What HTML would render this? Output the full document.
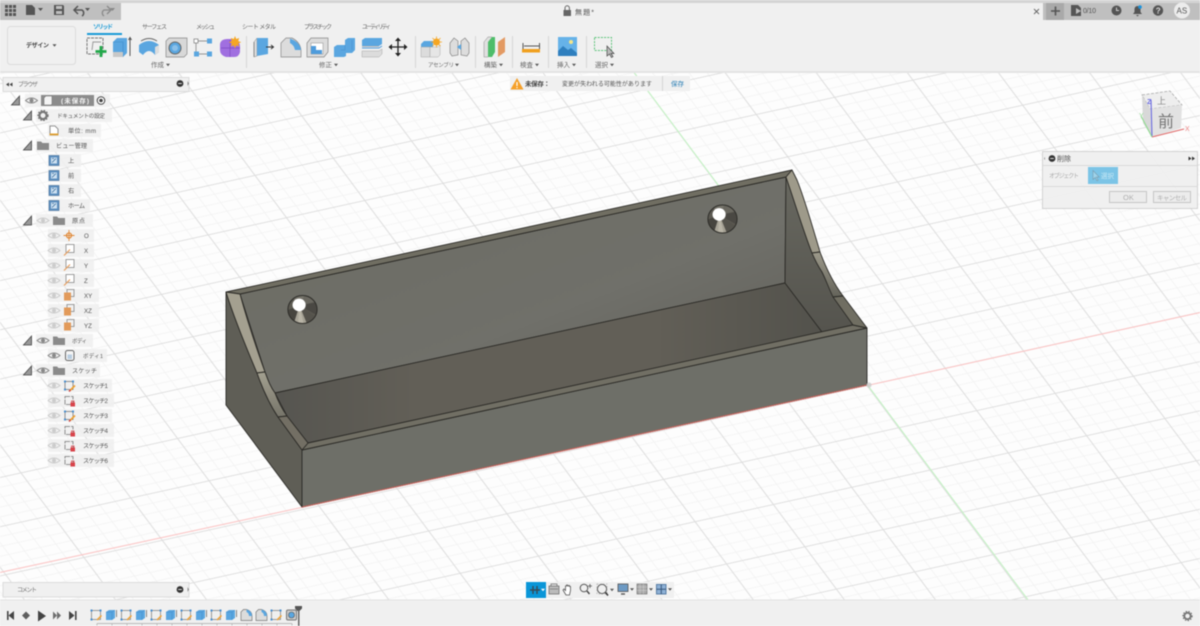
<!DOCTYPE html>
<html lang="ja"><head><meta charset="utf-8"><title>無題</title>
<style>
html,body{margin:0;padding:0;width:1200px;height:626px;overflow:hidden;background:#fdfdfd}
svg{display:block;filter:blur(.4px)}
text{font-family:"Liberation Sans","Noto Sans CJK JP",sans-serif;font-size:6.5px;fill:#555}
.b{font-weight:700}
.tab{font-size:6px;fill:#666}
.tl{font-size:6.5px;fill:#666}
.tr{font-size:6.2px;fill:#555}
</style></head><body>
<svg width="1200" height="626" viewBox="0 0 1200 626" xmlns="http://www.w3.org/2000/svg">
<defs>
<pattern id="grid" width="100" height="100" patternUnits="userSpaceOnUse" patternTransform="matrix(.783 -.172 .315 .423 867 385.5)">
<g fill="#f2f2f2">
<rect x="19.6" width="1.1" height="100"/><rect x="39.6" width="1.1" height="100"/><rect x="59.6" width="1.1" height="100"/><rect x="79.6" width="1.1" height="100"/>
<rect y="19.3" width="100" height="1.5"/><rect y="39.3" width="100" height="1.5"/><rect y="59.3" width="100" height="1.5"/><rect y="79.3" width="100" height="1.5"/>
</g>
<g fill="#dedede"><rect x="-.7" width="1.4" height="100"/><rect x="99.3" width="1.4" height="100"/><rect y="-1" width="100" height="2"/><rect y="99" width="100" height="2"/></g>
</pattern>
<linearGradient id="gBack" x1="0" y1="0" x2="1" y2="1"><stop offset="0" stop-color="#6c6c63"/><stop offset=".6" stop-color="#70706a"/><stop offset="1" stop-color="#5f5e58"/></linearGradient>
<linearGradient id="gFloor" x1="0" y1="0" x2="1" y2="0"><stop offset="0" stop-color="#565550"/><stop offset=".25" stop-color="#625f57"/><stop offset=".7" stop-color="#625f57"/><stop offset="1" stop-color="#53524c"/></linearGradient>
<linearGradient id="gRight" x1="0" y1="0" x2="0" y2="1"><stop offset="0" stop-color="#686860"/><stop offset="1" stop-color="#55544e"/></linearGradient>
<linearGradient id="gCurveL" x1="0" y1="0" x2="0" y2="1"><stop offset="0" stop-color="#a3a090"/><stop offset="1" stop-color="#77756a"/></linearGradient>
<linearGradient id="gCurveR" x1="0" y1="0" x2="0" y2="1"><stop offset="0" stop-color="#9c998a"/><stop offset="1" stop-color="#64635a"/></linearGradient>
<clipPath id="hc"><ellipse rx="14.6" ry="14"/></clipPath>
<g id="hole">
<ellipse rx="14.6" ry="14" fill="#5c5a52"/>
<g clip-path="url(#hc)">
<path d="M-3,-4L-18,2L-16,18L-8,18Z" fill="#47453f"/>
<path d="M-3,-4L-10,18L-2,20L2,18Z" fill="#a8a497"/>
<path d="M-3,-4L-5,20L8,18Z" fill="#bdb9ab" opacity=".75"/>
<path d="M-3,-4L6,18L18,10Z" fill="#55534c"/>
<path d="M-3,-4L18,8L18,-8Z" fill="#4a4843"/>
<path d="M-3,-4L18,-9L2,-18Z" fill="#6a6860"/>
<path d="M-3,-4L4,-18L-14,-16Z" fill="#76746b"/>
</g>
<ellipse rx="14.6" ry="14" fill="none" stroke="#2e2d29" stroke-width="1"/>
<ellipse cx="-3.4" cy="-4.6" rx="6.6" ry="6.3" fill="#fff"/>
</g>
<g id="eye"><path d="M-6,0Q0,-5 6,0Q0,5 -6,0Z" fill="none" stroke="#888" stroke-width="1"/><circle r="2" fill="#888"/></g>
<g id="eyef" opacity=".35"><path d="M-6,0Q0,-5 6,0Q0,5 -6,0Z" fill="none" stroke="#888" stroke-width="1"/><circle r="2" fill="#888"/></g>
<g id="tri"><path d="M-5,4L3,4L3,-5Z" fill="#999" stroke="#444" stroke-width=".8"/></g>
<path id="folder" d="M-6,-4h4l1.5,1.5h6.5v7h-12z" fill="#8a8a8a"/>
<g id="view"><rect x="-5" y="-5" width="10" height="10" fill="#5d8fbf" stroke="#446f99" stroke-width=".6"/><rect x="-3" y="-3" width="6" height="6" fill="#cfe2f2"/><path d="M-2,2L2,-2M-2,-2h2" stroke="#3c6e9c" stroke-width=".8" fill="none"/></g>
<g id="axis"><rect x="-3" y="-6" width="8" height="8" fill="#fff" stroke="#888" stroke-width=".8"/><path d="M-5,5L1,-1" stroke="#e8a060" stroke-width="1.2"/></g>
<g id="plane"><rect x="-2" y="-6" width="7" height="7" fill="none" stroke="#888" stroke-width=".8"/><rect x="-5" y="-3" width="7" height="8" fill="#e29a5a"/></g>
<g id="sk1"><rect x="-4" y="-4" width="8" height="8" fill="none" stroke="#777" stroke-width=".8"/><g fill="#4a90d0"><rect x="-5" y="-5" width="2" height="2"/><rect x="3" y="-5" width="2" height="2"/><rect x="-5" y="3" width="2" height="2"/></g><path d="M1,5L6,0" stroke="#f0a030" stroke-width="1.6"/><path d="M0,6L1.5,4.5" stroke="#d04040" stroke-width="1.4"/></g>
<g id="sk2"><rect x="-4" y="-4" width="8" height="8" fill="none" stroke="#777" stroke-width=".8" stroke-dasharray="5 1"/><rect x="1.5" y="2" width="4.5" height="4" fill="#d9434a"/><path d="M2.5,2v-1.5h2.5v1.500" fill="none" stroke="#d9434a" stroke-width=".8"/></g>
<g id="tlsk"><rect x="-4.5" y="-4.5" width="9" height="9" fill="none" stroke="#777" stroke-width=".7"/><g fill="#4a90d0"><rect x="-5.5" y="-5.5" width="2" height="2"/><rect x="3.5" y="-5.5" width="2" height="2"/><rect x="-5.5" y="3.5" width="2" height="2"/></g><path d="M1,5L5.5,.5" stroke="#f0a030" stroke-width="1.4"/></g>
<g id="tlex"><path d="M-5,-3L-2,-5H4V3L1,5H-5Z" fill="#5aa6e0"/><path d="M1,5V-3H-5M1,-3L4,-5" fill="none" stroke="#3c86c4" stroke-width=".4"/><path d="M5.500,-5V2" stroke="#555" stroke-width=".7"/></g>
<g id="tlfi"><path d="M-5.500,5.500V-3L-3,-5.500H0Q5.500,-4 5.500,1V5.500Z" fill="#dcdcdc" stroke="#777" stroke-width=".7"/><path d="M0,-5.500Q5.500,-4 5.500,1L2.500,1Q2.500,-2 0,-3Z" fill="#5aa6e0"/></g>
<path id="caret" d="M-2,-1.200h4l-2,2.400z" fill="#555"/>
<path id="caretw" d="M-2,-1.200h4l-2,2.400z" fill="#fff"/>
<g id="smallcirc"><circle r="3.400" fill="#333"/><path d="M-1.800,0h3.600" stroke="#f0f0f0" stroke-width=".9"/></g>
</defs>

<rect width="1200" height="626" fill="#fdfdfd"/>
<rect width="1200" height="626" fill="url(#grid)"/>
<path d="M0,572.500L867,385.500L1200,312.500" stroke="#fbc6c6" stroke-width="1.100" fill="none"/>
<path d="M633,71L1058,640" stroke="#c5f3c5" stroke-width="1.100" fill="none"/>

<!-- model -->
<path d="M226,292L792,170L820,252L867,328V385L302,507L226,405Z" fill="#5f5e56" stroke="none" opacity="0"/>
<g stroke="#2c2b27" stroke-width=".9" stroke-linejoin="round">
<path d="M226,292C234,318 246,347 257,373C263,390 270,405 278,417L302,450V507L226,405Z" fill="#5f5e56"/>
<path d="M302,450L867,328V385L302,507Z" fill="#6e6f68"/>
<path d="M240,294L786,177L785,283L275,393C270,386 268,380 265,372Z" fill="url(#gBack)"/>
<path d="M275,393L785,283L822,332L308,443L287,416Z" fill="url(#gFloor)"/>
<path d="M786,177C795,203 803,230 812,253C815,260 818,266 822,272C832,292 842,308 853,325L822,332L785,283Z" fill="url(#gRight)"/>
<path d="M226,292L792,170L786,177L240,294Z" fill="#706e62"/>
<path d="M302,450L867,328L853,325L308,443Z" fill="#716f64"/>
<path d="M226,292L240,294C247,320 256,347 265,372L257,373C246,347 234,318 226,292Z" fill="#a4a090"/>
<path d="M257,373L265,372C268,380 270,386 275,393C278,401 282,409 287,416L278,417C270,405 263,390 257,373Z" fill="url(#gCurveL)"/>
<path d="M278,417L287,416L308,443L302,450Z" fill="#736f64"/>
<path d="M792,170L786,177C795,203 803,230 812,253L820,252C812,225 805,200 797,180Z" fill="#9e9a8a"/>
<path d="M812,253L820,252C826,268 834,284 843,296L833,297C829,289 826,280 822,272C818,266 815,260 812,253Z" fill="url(#gCurveR)"/>
<path d="M833,297L843,296L867,328L853,325Z" fill="#706e62"/>
</g>
<path d="M302,507L867,385" stroke="#c96a62" stroke-width="1"/>
<circle cx="869" cy="385" r="2.600" fill="#ccc" opacity=".8"/>
<use href="#hole" x="302.500" y="309.500"/>
<use href="#hole" x="722.500" y="219"/>

<!-- top chrome -->
<rect width="1200" height="3" fill="#d4d4d4"/>
<rect y="3" width="1200" height="17" fill="#bfbfbf"/>
<rect x="121" y="3" width="922" height="18" fill="#f0f0f0"/>
<rect y="20" width="1200" height="51" fill="#f0f0f0"/>
<rect y="71" width="1200" height="2" fill="#e4e4e4"/>
<rect x="1046" y="3" width="18" height="17" fill="#a9a9a9"/>
<!-- top-left icons -->
<g fill="#555">
<rect x="5" y="5" width="3" height="3"/><rect x="9" y="5" width="3" height="3"/><rect x="13" y="5" width="3" height="3"/>
<rect x="5" y="9" width="3" height="3"/><rect x="9" y="9" width="3" height="3"/><rect x="13" y="9" width="3" height="3"/>
<rect x="5" y="13" width="3" height="3"/><rect x="9" y="13" width="3" height="3"/><rect x="13" y="13" width="3" height="3"/>
<path d="M26,5h6l3,3v7h-9z"/><path d="M38,8h5l-2.500,3z"/>
<path d="M54,5h9l1,1v9h-10zM56,6v3h6v-3zM56,11v3h6v-3z" fill-rule="evenodd"/>
<path d="M85,8h5l-2.500,3z"/><path d="M110,8h5l-2.500,3z" fill="#888"/>
</g>
<path d="M75,10h7a3.500,3.500 0 0 1 0,6M78,6l-4,4l4,4" fill="none" stroke="#555" stroke-width="1.500"/>
<path d="M111,10h-7a3.500,3.500 0 0 0 0,6M107,6l4,4l-4,4" fill="none" stroke="#8a8a8a" stroke-width="1.300"/>
<!-- title -->
<rect x="563.500" y="10" width="7.500" height="6" fill="#666"/><path d="M565,10V8a2.200,2.200 0 0 1 4.400,0v2" fill="none" stroke="#666" stroke-width="1"/>
<text x="575" y="14.500" textLength="19" style="font-size:7px">無題*</text>
<path d="M1034,9l5,5M1039,9l-5,5" stroke="#666" stroke-width=".9"/>
<path d="M1051,11h9M1055.500,6.500v9" stroke="#555" stroke-width="1.600"/>
<path d="M1071,5h7l3,3v8h-10z" fill="#555"/><path d="M1076,8l5,3l-5,3z" fill="#bfbfbf"/>
<text x="1083" y="13" textLength="13" style="font-size:7px">0/10</text>
<circle cx="1116.500" cy="10.500" r="5" fill="#555"/><path d="M1116.500,7.500v3h2.500" stroke="#ccc" fill="none"/>
<path d="M1133,14h9l-1.500,-2v-3a3,3 0 0 0 -6,0v3zM1136,15h3l-1.500,1.500z" fill="#555"/><circle cx="1140" cy="7" r="1.800" fill="#1b93dd"/>
<circle cx="1158" cy="10.500" r="5.200" fill="#555"/><text x="1155.800" y="13.500" style="font-size:8px;fill:#ddd" class="b">?</text>
<circle cx="1182" cy="10.500" r="8" fill="#ececec"/><text x="1176.500" y="13.500" style="font-size:8px;fill:#555">AS</text>

<!-- tabs -->
<text x="93" y="29" textLength="20" class="b" style="fill:#1a9ad6;font-size:6px">ソリッド</text>
<rect x="87" y="33" width="35" height="2" fill="#1a9ad6"/>
<text x="142" y="29" textLength="25" class="tab">サーフェス</text>
<text x="196" y="29" textLength="19" class="tab">メッシュ</text>
<text x="242" y="29" textLength="34" class="tab">シート メタル</text>
<text x="304" y="29" textLength="28" class="tab">プラスチック</text>
<text x="362" y="29" textLength="29" class="tab">ユーティリティ</text>
<rect x="7.500" y="26.500" width="68" height="38" rx="3" fill="#f0f0f0" stroke="#dcdcdc"/>
<text x="26" y="47.500" textLength="23" class="b" style="font-size:6px;fill:#444">デザイン</text><use href="#caret" x="54.500" y="45.500"/>

<!-- toolbar icons -->
<g>
<rect x="87" y="38" width="16" height="16" fill="none" stroke="#777" stroke-dasharray="3 1"/><path d="M92,50L93,42H101" fill="none" stroke="#999"/><path d="M101,46v11M95.500,51.500h11" stroke="#22a84a" stroke-width="2.800"/>
<path d="M113,42l4,-4h10v15l-4,4h-10z" fill="#5aa6e0"/><path d="M113,42h10v15" fill="none" stroke="#3f89c8" stroke-width=".6"/><path d="M113,52h10v5h-10z" fill="#c8c8c8"/><path d="M130,38v18M128.500,40l1.500,-2.500l1.500,2.500" stroke="#555" fill="none"/>
<path d="M139,45Q149,37 159,45l0,7l-4,3Q149,47 143,55l-4,-3z" fill="#5aa6e0"/><path d="M141,41Q149,36 157,41" fill="none" stroke="#666"/><path d="M155,47l4,-2v7l-4,3z" fill="#ddd"/>
<path d="M166,41l3,-3h18v16l-3,3h-18z" fill="#d8d8d8" stroke="#888" stroke-width=".7"/><circle cx="175" cy="48" r="6" fill="#5aa6e0" stroke="#666"/><circle cx="175" cy="48" r="3" fill="#8cc0e8"/>
<rect x="194" y="39" width="4" height="4" fill="#fff" stroke="#777" stroke-width=".7"/><rect x="207" y="38.500" width="5" height="5" fill="#5aa6e0"/><rect x="194" y="51.500" width="5" height="5" fill="#5aa6e0"/><rect x="207" y="51.500" width="5" height="5" fill="#5aa6e0"/><path d="M198,41h9M196,43v8.500M199,54h8" stroke="#777" stroke-width=".7"/>
<path d="M220,44q1,-5 7,-5h8q5,2 5,8v5q-1,5 -6,5h-8q-6,-2 -6,-7z" fill="#a06fe0"/><path d="M221,48h19M230,40v17" stroke="#7e4cc2" stroke-width=".7"/><path d="M235,36l1.200,3l3,-1l-1,3l3,1.200l-3,1.200l1,3l-3,-1l-1.200,3l-1.200,-3l-3,1l1,-3l-3,-1.200l3,-1.200l-1,-3l3,1z" fill="#f5a623"/>
<path d="M254,42l3,-4v18l-3,1z" fill="#ddd" stroke="#888" stroke-width=".5"/><path d="M257,38h11v16l-11,2z" fill="#5aa6e0"/><path d="M266,47h7M271,45l2.500,2l-2.500,2" stroke="#333" fill="none"/><path d="M254,42v15" stroke="#888"/>
<path d="M281,43L286,38H292Q300,42 301,50V57H281Z" fill="#dcdcdc" stroke="#888" stroke-width=".7"/><path d="M290,38.500Q300,42 301,50H295Q294,45 290,43Z" fill="#5aa6e0"/>
<path d="M307,43l4,-5h17v14l-4,5h-17z" fill="#dcdcdc" stroke="#888" stroke-width=".7"/><rect x="311" y="43" width="12" height="11" fill="#fff" stroke="#888" stroke-width=".5"/><path d="M311,46l5,0v4h6v4h-11z" fill="#4f9cdc"/>
<path d="M334,47l3,-2h8v-5l3,-2h7v12l-3,3h-6v3l-2,1h-10z" fill="#5aa6e0"/><path d="M345,45v5h-4M352,40v10" stroke="#3f89c8" stroke-width=".4" fill="none"/>
<path d="M362,40l3,-2h17v6l-3,2h-17z" fill="#5aa6e0"/><path d="M362,51h17l3,-2v5l-3,3h-17z" fill="#dcdcdc" stroke="#999" stroke-width=".4"/><path d="M362,48h17l3,-2" stroke="#4f9cdc" fill="none"/><path d="M362,46.500h17" stroke="#bbb"/>
<path d="M398,40v14M391,47h14" stroke="#222" stroke-width="1.300"/><path d="M398,37.500l3,3.500h-6zM398,56.500l3,-3.500h-6zM388.500,47l3.500,-3v6zM407.500,47l-3.500,-3v6z" fill="#222"/>
<path d="M421,44l3,-3h9v6h-12z" fill="#5aa6e0"/><path d="M421,47h9v10h-9z" fill="#dcdcdc" stroke="#999" stroke-width=".4"/><path d="M430,47h8l2,-2v10l-2,2h-8z" fill="#e6e6e6" stroke="#999" stroke-width=".4"/><circle cx="436.500" cy="42" r="3.500" fill="#f5a623"/><path d="M436.500,36.500v11M431,42h11M432.500,38l8,8M440.500,38l-8,8" stroke="#f5a623" stroke-width=".8"/>
<path d="M450,43l4,-5l4,3v14l-6,1l-2,-3zM469,43l-4,-5l-4,3v14l6,1l2,-3z" fill="#ddd" stroke="#888" stroke-width=".7"/><path d="M457,47l4,-3v6z" fill="#5aa6e0"/>
<path d="M484,42l4,-5h4v15l-4,5h-4z" fill="#e0e0e0" stroke="#888" stroke-width=".5"/><path d="M488,42l4,-5h3v15l-3,5h-4z" fill="#4fbd6a"/><path d="M498,42l7,-5v15l-7,5z" fill="#e39a63"/>
<path d="M523,43v6M539.500,43v6M524,46h15" stroke="#555" fill="none"/><rect x="522" y="49" width="18" height="3.500" fill="#f0a020"/>
<rect x="558" y="37" width="19" height="19" fill="#66b2e8"/><circle cx="571" cy="42" r="2" fill="#f4e58a"/><path d="M558,56v-5l5,-5l5,4l3,-2l6,5v3z" fill="#2f7fbe"/>
<rect x="594.500" y="37.500" width="17" height="13" fill="none" stroke="#5cc47a" stroke-dasharray="2 1.200"/><path d="M607,46v10l2.500,-2l2,3.500l1.500,-1l-2,-3h3z" fill="#bbb" stroke="#444" stroke-width=".7"/>
</g>
<g stroke="#d6d6d6"><path d="M246.500,36v32M415.500,36v32M475.500,36v32M512.500,36v32M548.500,36v32M586.500,36v32"/></g>
<g>
<text x="151" y="67" textLength="13" class="tl">作成</text><use href="#caret" x="168" y="65"/>
<text x="319" y="67" textLength="13" class="tl">修正</text><use href="#caret" x="336" y="65"/>
<text x="428" y="67" textLength="26" class="tl" style="font-size:5.500px">アセンブリ</text><use href="#caret" x="457" y="65"/>
<text x="484" y="67" textLength="13" class="tl">構築</text><use href="#caret" x="501" y="65"/>
<text x="520" y="67" textLength="13" class="tl">検査</text><use href="#caret" x="537" y="65"/>
<text x="557" y="67" textLength="13" class="tl">挿入</text><use href="#caret" x="574" y="65"/>
<text x="595" y="67" textLength="13" class="tl">選択</text><use href="#caret" x="612" y="65"/>
</g>

<!-- unsaved bar -->
<rect x="510" y="76" width="180" height="15" fill="#f0f0f0"/>
<path d="M517,78l6.500,11.500h-13z" fill="#f5a02a"/><rect x="516.400" y="82" width="1.200" height="4" fill="#fff"/><rect x="516.400" y="87" width="1.200" height="1.200" fill="#fff"/>
<text x="525" y="86" textLength="25" class="b" style="font-size:6.500px;fill:#444">未保存：</text>
<text x="562" y="86" textLength="90" style="font-size:6px">変更が失われる可能性があります</text>
<rect x="662" y="76" width="1" height="15" fill="#d4d4d4"/>
<text x="671" y="86" textLength="13" style="font-size:6.500px;fill:#2b7fb5">保存</text>

<!-- browser panel -->
<rect x="3" y="77.500" width="186" height="14" fill="#f0f0f0" stroke="#dcdcdc"/>
<path d="M6,84.500l3,-2v4zM9.500,84.500l3,-2v4z" fill="#444"/>
<text x="18" y="86.500" textLength="20" style="font-size:6px;fill:#777">ブラウザ</text>
<use href="#smallcirc" x="180" y="83.500"/>
<path d="M187.500,81l1.500,2.500l-1.500,2.500z" fill="#888"/>

<!-- tree backgrounds -->
<g fill="#f0f0f0" opacity=".92">
<rect x="25" y="94" width="85" height="13"/><rect x="36" y="109" width="76" height="13"/><rect x="48" y="124" width="53" height="13"/><rect x="36" y="139" width="57" height="13"/>
<rect x="48" y="154" width="33" height="13"/><rect x="48" y="169" width="33" height="13"/><rect x="48" y="184" width="33" height="13"/><rect x="48" y="199" width="42" height="13"/>
<rect x="36" y="214" width="57" height="13"/>
<rect x="48" y="229" width="46" height="13"/><rect x="48" y="244" width="46" height="13"/><rect x="48" y="259" width="46" height="13"/><rect x="48" y="274" width="46" height="13"/><rect x="48" y="289" width="51" height="13"/><rect x="48" y="304" width="51" height="13"/><rect x="48" y="319" width="51" height="13"/>
<rect x="36" y="334" width="57" height="13"/><rect x="48" y="349" width="59" height="13"/><rect x="36" y="364" width="64" height="13"/>
<rect x="48" y="379" width="64" height="13"/><rect x="48" y="394" width="66" height="13"/><rect x="48" y="409" width="64" height="13"/><rect x="48" y="424" width="66" height="13"/><rect x="48" y="439" width="66" height="13"/><rect x="48" y="454" width="66" height="13"/>
</g>
<!-- tree content -->
<use href="#tri" x="16.500" y="101"/><use href="#eye" x="31.500" y="100.500"/>
<rect x="41" y="95" width="53" height="11" fill="#8c8c8c"/><path d="M44,98l2,-2h6v8l-1,1h-7z" fill="#f4f4f4" stroke="#666" stroke-width=".5"/>
<text x="61" y="103" textLength="28" class="b" style="font-size:6.500px;fill:#f4f4f4">(未保存)</text>
<circle cx="101" cy="100.500" r="3.800" fill="#fff" stroke="#444"/><circle cx="101" cy="100.500" r="1.800" fill="#444"/>

<use href="#tri" x="28.500" y="116"/>
<circle cx="43" cy="115.500" r="3.600" fill="none" stroke="#777" stroke-width="2.200"/><circle cx="43" cy="115.500" r="5" fill="none" stroke="#777" stroke-width="1.300" stroke-dasharray="1.600 1.400"/>
<text x="57" y="118" textLength="48" class="tr" style="font-size:5.600px">ドキュメントの設定</text>

<path d="M50,126h5l3,3v6h-8z" fill="#fff" stroke="#777" stroke-width=".8"/><rect x="49.500" y="133.500" width="9" height="1.800" fill="#e0a030"/>
<text x="68" y="133" textLength="28" class="tr">単位: mm</text>

<use href="#tri" x="28.500" y="146"/><use href="#folder" x="43" y="145.500"/>
<text x="56" y="148" textLength="31" class="tr">ビュー管理</text>
<use href="#view" x="54" y="160.500"/><text x="68" y="163" class="tr">上</text>
<use href="#view" x="54" y="175.500"/><text x="68" y="178" class="tr">前</text>
<use href="#view" x="54" y="190.500"/><text x="68" y="193" class="tr">右</text>
<use href="#view" x="54" y="205.500"/><text x="68" y="208" textLength="17" class="tr">ホーム</text>

<use href="#tri" x="28.500" y="221"/><use href="#eyef" x="43" y="220.500"/><use href="#folder" x="59" y="220.500"/>
<text x="72" y="223" textLength="13" class="tr">原点</text>
<use href="#eyef" x="54" y="235.500"/><circle cx="69" cy="235.500" r="2.500" fill="none" stroke="#e08a3a" stroke-width="1.300"/><path d="M63.500,235.500h11M69,230v11" stroke="#e08a3a" stroke-width=".9"/><text x="84" y="238" class="tr">O</text>
<use href="#eyef" x="54" y="250.500"/><use href="#axis" x="69" y="250.500"/><text x="84" y="253" class="tr">X</text>
<use href="#eyef" x="54" y="265.500"/><use href="#axis" x="69" y="265.500"/><text x="84" y="268" class="tr">Y</text>
<use href="#eyef" x="54" y="280.500"/><use href="#axis" x="69" y="280.500"/><text x="84" y="283" class="tr">Z</text>
<use href="#eyef" x="54" y="295.500"/><use href="#plane" x="69" y="295.500"/><text x="84" y="298" class="tr">XY</text>
<use href="#eyef" x="54" y="310.500"/><use href="#plane" x="69" y="310.500"/><text x="84" y="313" class="tr">XZ</text>
<use href="#eyef" x="54" y="325.500"/><use href="#plane" x="69" y="325.500"/><text x="84" y="328" class="tr">YZ</text>

<use href="#tri" x="28.500" y="341"/><use href="#eye" x="43" y="340.500"/><use href="#folder" x="59" y="340.500"/>
<text x="72" y="343" textLength="15" class="tr" style="font-size:5.500px">ボディ</text>
<use href="#eye" x="54" y="355.500"/><rect x="65.500" y="350.500" width="8.500" height="10" rx="2" fill="#f4f4f4" stroke="#666"/><rect x="67.500" y="354.500" width="4.500" height="4.500" fill="#b8cde0"/>
<text x="83" y="358" textLength="20" class="tr" style="font-size:5.500px">ボディ1</text>

<use href="#tri" x="28.500" y="371"/><use href="#eye" x="43" y="370.500"/><use href="#folder" x="59" y="370.500"/>
<text x="72" y="373" textLength="25" class="tr">スケッチ</text>
<use href="#eyef" x="54" y="385.500"/><use href="#sk1" x="69" y="385.500"/><text x="83" y="388" textLength="25" class="tr">スケッチ1</text>
<use href="#eyef" x="54" y="400.500"/><use href="#sk2" x="69" y="400.500"/><text x="83" y="403" textLength="25" class="tr">スケッチ2</text>
<use href="#eyef" x="54" y="415.500"/><use href="#sk1" x="69" y="415.500"/><text x="83" y="418" textLength="25" class="tr">スケッチ3</text>
<use href="#eyef" x="54" y="430.500"/><use href="#sk2" x="69" y="430.500"/><text x="83" y="433" textLength="25" class="tr">スケッチ4</text>
<use href="#eyef" x="54" y="445.500"/><use href="#sk2" x="69" y="445.500"/><text x="83" y="448" textLength="25" class="tr">スケッチ5</text>
<use href="#eyef" x="54" y="460.500"/><use href="#sk2" x="69" y="460.500"/><text x="83" y="463" textLength="25" class="tr">スケッチ6</text>

<!-- view cube -->
<g>
<path d="M1142,95L1170,91L1182,105L1150,109Z" fill="#eeeeee" stroke="#aaa" stroke-width=".8" stroke-dasharray="3 1.500"/>
<path d="M1150,109L1182,105L1181,128L1152,137Z" fill="#e2e2e2"/>
<path d="M1142,95L1150,109L1152,137L1143,123Z" fill="#d8d8d8"/>
<text x="1158" y="127" style="font-size:16px;fill:#777">前</text>
<text x="1157" y="104" style="font-size:9px;fill:#888">上</text>
<path d="M1152,137L1151,100" stroke="#6a6adf" stroke-width="1.100"/><path d="M1152,137L1184,129" stroke="#e06a6a" stroke-width="1.100"/><path d="M1152,137L1141,116" stroke="#8fdc8f" stroke-width="1.100"/>
<text x="1147" y="104" class="b" style="font-size:7.500px;fill:#7070e0">Z</text>
<text x="1185" y="131" style="font-size:7px;fill:#e88">X</text>
<text x="1139" y="118" style="font-size:7px;fill:#9d9">Y</text>
</g>

<!-- dialog -->
<g>
<rect x="1042.500" y="151.500" width="155" height="57" fill="#f0f0f0" opacity=".94" stroke="#d0d0d0"/>
<path d="M1042.500,165.500h155M1042.500,186.500h155" stroke="#dadada"/>
<path d="M1045,157l-1,1.500l1,1.500z" fill="#888"/>
<use href="#smallcirc" x="1052" y="158.500"/>
<text x="1057" y="161" textLength="14" style="font-size:7px">削除</text>
<path d="M1188.500,156.500l3,2l-3,2zM1192,156.500l3,2l-3,2z" fill="#333"/>
<text x="1049" y="178" textLength="30" style="font-size:6px;fill:#aaa">オブジェクト</text>
<rect x="1088" y="167" width="30" height="17" fill="#7cc4e6"/>
<path d="M1093,170.500v9l2.200,-2l1.800,3.300l1.200,-.7l-1.800,-3h2.800z" fill="#9ed3ea" stroke="#7a9cad" stroke-width=".6"/>
<text x="1101" y="178" textLength="13" style="font-size:6.500px;fill:#c8e8f5">選択</text>
<rect x="1109.500" y="191.500" width="37" height="11" fill="#ececec" stroke="#c6c6c6"/><text x="1123" y="200" style="font-size:7.500px;fill:#b0b0b0">OK</text>
<rect x="1153.500" y="191.500" width="37" height="11" fill="#ececec" stroke="#c6c6c6"/><text x="1157" y="200" textLength="30" style="font-size:6.500px;fill:#b0b0b0">キャンセル</text>
</g>

<!-- comments -->
<rect x="3" y="582.500" width="186" height="14.500" fill="#f0f0f0" stroke="#dcdcdc"/>
<text x="17" y="592" textLength="20" style="font-size:6px;fill:#777">コメント</text>
<use href="#smallcirc" x="180" y="589.500"/>
<path d="M187.500,587l1.500,2.500l-1.500,2.500z" fill="#888"/>

<!-- nav bar -->
<rect x="526" y="582" width="148" height="16" fill="#f0f0f0"/>
<rect x="526" y="582" width="20" height="16" fill="#0a96d8"/>
<path d="M530,590h10M533,586v8M537,586v8" stroke="#3a4a55" stroke-width="1.400"/>
<use href="#caretw" x="543" y="590"/>
<rect x="549" y="586" width="10" height="8" fill="#bbb" stroke="#666" stroke-width=".7"/><path d="M551,586v-2h6v2" fill="none" stroke="#666" stroke-width=".7"/><path d="M550,589h8" stroke="#666" stroke-width=".6"/>
<path d="M566,595l-3,-5l1,-1l1.500,1.500v-4.500h1v-1h1v1h1v-.5h1v1h1v4l-1,4.500z" fill="#fff" stroke="#555" stroke-width=".8"/>
<circle cx="584" cy="588" r="3.800" fill="none" stroke="#555"/><path d="M587,591l2.500,3" stroke="#444" stroke-width="1.400"/><path d="M590,584v4M588,586h4" stroke="#555" stroke-width=".8"/>
<circle cx="602" cy="589" r="4.600" fill="none" stroke="#555"/><rect x="597" y="584" width="10" height="10" fill="none" stroke="#999" stroke-dasharray="1.500 1.500" stroke-width=".6"/><path d="M605.500,592.500l2.500,3" stroke="#333" stroke-width="1.500"/><use href="#caret" x="612" y="590"/>
<rect x="618" y="584" width="10" height="7.500" fill="#6d9ac4" stroke="#555" stroke-width=".8"/><path d="M621,594h4" stroke="#555" stroke-width="1.400"/><use href="#caret" x="632" y="589.500"/>
<rect x="637" y="584" width="10" height="10" fill="#a8a8a8" stroke="#666" stroke-width=".6"/><path d="M640,584v10M643.500,584v10M637,587h10M637,590.500h10" stroke="#ddd" stroke-width=".4"/><use href="#caret" x="651" y="589.500"/>
<rect x="656.500" y="584.500" width="9.500" height="9.500" fill="#8eb1d6" stroke="#5a7fa6"/><path d="M661.250,584.500v9.500M656.500,589.250h9.500" stroke="#36577a"/><use href="#caret" x="670" y="589.500"/>

<!-- timeline -->
<rect y="600" width="1200" height="26" fill="#f0f0f0"/>
<rect y="599.500" width="1200" height="1" fill="#e2e2e2"/>
<g fill="#444">
<rect x="7" y="611" width="1.600" height="9"/><path d="M14,611v9l-5.500,-4.500z"/>
<path d="M22,615.500l4,-4v8zM26,611.500l4,4l-4,4z" opacity=".85"/>
<path d="M38,610.500l8,5.500l-8,5.500z"/>
<path d="M53,611.500l4,4l-4,4zM57,611.500l4,4l-4,4z" opacity=".75"/>
<path d="M69,611v9l5.500,-4.500z"/><rect x="75" y="611" width="1.600" height="9"/>
</g>
<use href="#tlsk" x="96" y="615"/><use href="#tlex" x="111" y="615"/><use href="#tlsk" x="126" y="615"/><use href="#tlex" x="141" y="615"/>
<use href="#tlsk" x="156" y="615"/><use href="#tlex" x="171" y="615"/><use href="#tlsk" x="186" y="615"/><use href="#tlex" x="201" y="615"/>
<use href="#tlsk" x="216" y="615"/><use href="#tlex" x="231" y="615"/><use href="#tlfi" x="246.500" y="615"/><use href="#tlfi" x="261.500" y="615"/>
<use href="#tlsk" x="276" y="615"/>
<rect x="286.500" y="610" width="10" height="10" rx="1.500" fill="#ccc" stroke="#777"/><circle cx="291.500" cy="615" r="3" fill="#5aa6e0" stroke="#555" stroke-width=".6"/>
<path d="M97,623.500h195M97,623.500v2M112,623.500v2M127,623.500v2M142,623.500v2M157,623.500v2M172,623.500v2M187,623.500v2M202,623.500v2M217,623.500v2M232,623.500v2M247,623.500v2M262,623.500v2M277,623.500v2M292,623.500v2" stroke="#bbb" fill="none"/>
<path d="M295,606h7v2.500l-2.500,2.500h-2l-2.500,-2.500z" fill="#555"/><rect x="298" y="610" width="1.500" height="16" fill="#666"/>
<circle cx="1187.500" cy="616" r="3.200" fill="none" stroke="#777" stroke-width="1.900"/><circle cx="1187.500" cy="616" r="4.600" fill="none" stroke="#777" stroke-width="1.100" stroke-dasharray="1.500 1.300"/>
</svg>
</body></html>
